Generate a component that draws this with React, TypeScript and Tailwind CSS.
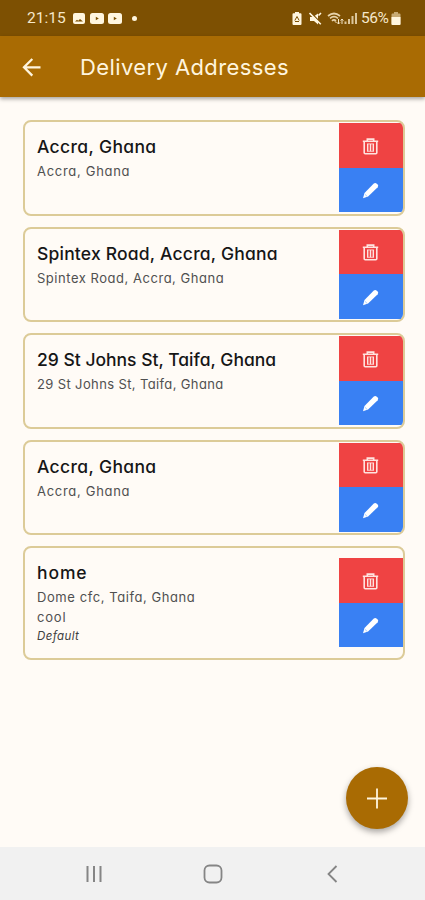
type Address = { title: string; titleTracking: string; line: string; lineTracking: string; note?: string; isDefault?: boolean };

const addresses: Address[] = [
  { title: 'Accra, Ghana', titleTracking: 'tracking-[0.35px]', line: 'Accra, Ghana', lineTracking: 'tracking-[0.7px]' },
  { title: 'Spintex Road, Accra, Ghana', titleTracking: 'tracking-[0.2px]', line: 'Spintex Road, Accra, Ghana', lineTracking: 'tracking-[0.53px]' },
  { title: '29 St Johns St, Taifa, Ghana', titleTracking: 'tracking-[0px]', line: '29 St Johns St, Taifa, Ghana', lineTracking: 'tracking-[0.37px]' },
  { title: 'Accra, Ghana', titleTracking: 'tracking-[0.35px]', line: 'Accra, Ghana', lineTracking: 'tracking-[0.7px]' },
  { title: 'home', titleTracking: 'tracking-[0.9px]', line: 'Dome cfc, Taifa, Ghana', lineTracking: 'tracking-[0.57px]', note: 'cool', isDefault: true },
];

function StatusBar() {
  return (
    <div className="flex h-9 shrink-0 items-center bg-[#7d5002] pl-[27px] pr-[24px] text-[#f6e8cb]">
      <span className="w-[40px] pt-[2px] font-['Roboto',sans-serif] text-[15.5px] leading-none whitespace-nowrap">21:15</span>
      <svg className="ml-[6px]" width="12" height="11" viewBox="0 0 12 11">
        <rect width="12" height="11" rx="2" fill="#fff6df" />
        <path d="M2 8.5 4 6.8l1.2.9L7 6l3 2.5Z" fill="#7d5002" />
      </svg>
      {[0, 1].map((i) => (
        <svg key={i} className={i === 0 ? 'ml-[5px]' : 'ml-[4px]'} width="14" height="11" viewBox="0 0 14 11">
          <rect width="14" height="11" rx="2.5" fill="#fff6df" />
          <path d="m5.8 3.8 3 1.7-3 1.7Z" fill="#7d5002" />
        </svg>
      ))}
      <span className="ml-[10px] size-[5px] rounded-full bg-[#fff6df]" />
      <div className="ml-auto flex items-center">
        <svg className="mr-[1px]" width="10" height="13" viewBox="0 0 10 13">
          <path d="M3 0h4v1.3h1.5q1 0 1 1V12q0 1-1 1h-7q-1 0-1-1V2.3q0-1 1-1H3Z" fill="#fff6df" />
          <path d="M2.8 8.5 5 4.5l2.2 4M3 9.5h4" stroke="#7d5002" fill="none" />
        </svg>
        <svg className="ml-[6px]" width="13" height="13" viewBox="0 0 13 13">
          <path d="M1 5h3l5-3.5v11L5 9H1Z" fill="#fff6df" />
          <path d="m1 0 11 11" stroke="#7d5002" strokeWidth="1.6" />
          <path d="m.5 1 11.3 11.2M9.5 3.5 12 1" stroke="#fff6df" strokeWidth="1.6" />
        </svg>
        <svg className="ml-[5px]" width="17" height="13" viewBox="0 0 17 13">
          <path d="M1 4q6-5 12 0M3 6.4q4-3.4 8 0M5 8.8q2-2 4 0" stroke="#e7d3ab" strokeWidth="1.7" fill="none" />
          <path d="m7 9 2 2 1-1Z" fill="#e7d3ab" />
          <path d="M11.5 7v5M10 10.4l1.5 1.6 1.5-1.6M15 12V7m-1.4 1.6L15 7l1.4 1.6" stroke="#f6e8cb" strokeWidth="1" fill="none" />
        </svg>
        <svg width="14" height="13" viewBox="0 0 14 13">
          <path d="M1.5 12V9.5M5 12V7M8.5 12V4M12 12V1" stroke="#dcc69c" strokeWidth="2" />
        </svg>
        <span className="ml-[3px] w-[30px] pt-[1px] font-['Roboto',sans-serif] text-[15.5px] leading-none tracking-[-0.5px] whitespace-nowrap">56%</span>
        <svg width="10" height="13" viewBox="0 0 10 13">
          <path d="M3 0h4v1.5h1.5q1 0 1 1V12q0 1-1 1h-7q-1 0-1-1V2.5q0-1 1-1H3Z" fill="#c7aa73" />
          <path d="M.5 5h9v7q0 1-1 1h-7q-1 0-1-1Z" fill="#fff6df" />
        </svg>
      </div>
    </div>
  );
}

function Header() {
  return (
    <header className="z-10 flex h-[61px] shrink-0 items-center bg-[#a96b03] pl-[22px] text-[#fff5de] shadow-[0_2px_4px_rgba(0,0,0,0.35)]">
      <svg width="20" height="20" viewBox="0 0 20 20" fill="none" stroke="currentColor" strokeWidth="2.3">
        <path d="M10.3 2 2 10.3 10.3 18.6M2.2 10.3h16.3" />
      </svg>
      <h1 className="ml-[38px] text-[22px] leading-none tracking-[0.4px] whitespace-nowrap">Delivery Addresses</h1>
    </header>
  );
}

function TrashIcon() {
  return (
    <svg className="translate-y-[0.5px]" width="17" height="18" viewBox="0 0 17 18" fill="none" stroke="#ffe3df" strokeWidth="1.6">
      <path d="M.8 3.7h15.4M5.3 3.5V1.6h6.4v1.9" />
      <path d="M2.2 4v11.2q0 1 1 1h10.6q1 0 1-1V4" />
      <path d="M5.7 6.5v7.2M8.5 6.5v7.2M11.3 6.5v7.2" strokeWidth="1.4" />
      <path d="M5 6.4h7M5 13.8h7" strokeWidth=".8" />
    </svg>
  );
}

function PencilIcon() {
  return (
    <svg className="translate-y-[0.5px]" width="17" height="18" viewBox="0 0 17 18">
      <path d="M2.5 11.6 11.8 2.1q1.4-1.2 3 .1l.8.8q1.2 1.4.1 2.7L6.1 15 1 16.7Z" fill="#fff" />
      <path d="m2.8 12.7 2.2 2.1" stroke="#8fc2ff" strokeWidth=".8" />
    </svg>
  );
}

function AddressCard({ address }: { address: Address }) {
  return (
    <article className={`flex items-center overflow-hidden rounded-[8px] border-2 border-[#dccb98] bg-[#fffbf6] ${address.isDefault ? 'h-[113.5px]' : 'h-[95.5px]'}`}>
      <div className="min-w-0 flex-1 self-stretch pl-[12.5px] pt-[13px]">
        <h2 className={`text-[17.5px] leading-[24px] font-medium text-[#161616] whitespace-nowrap ${address.titleTracking}`}>{address.title}</h2>
        <p className={`mt-px text-[13px] leading-[22px] text-[#505050] whitespace-nowrap ${address.lineTracking}`}>{address.line}</p>
        {address.note && <p className="text-[13px] leading-[19px] tracking-[0.8px] text-[#505050]">{address.note}</p>}
        {address.isDefault && <p className="text-[11.5px] leading-[18px] tracking-[0.4px] text-[#404040] italic">Default</p>}
      </div>
      <div className="flex h-[89px] w-[64px] flex-col">
        <button aria-label="Delete" className="flex flex-1 items-center justify-center bg-[#ef4343]"><TrashIcon /></button>
        <button aria-label="Edit" className="flex flex-1 items-center justify-center bg-[#3980f3]"><PencilIcon /></button>
      </div>
    </article>
  );
}

export default function App() {
  return (
    <div className="relative flex h-[900px] w-[425px] flex-col overflow-hidden bg-[#fffbf6] font-['Inter','Open_Sans',sans-serif] [font-feature-settings:'cv11']">
      <StatusBar />
      <Header />
      <main className="flex flex-1 flex-col gap-[11px] pt-[23px] pr-[20.5px] pl-[22.5px]">
        {addresses.map((address, i) => <AddressCard key={i} address={address} />)}
      </main>
      <button aria-label="Add address" className="absolute top-[767px] left-[346px] flex size-[62px] items-center justify-center rounded-full bg-[#a96b03] shadow-[0_3px_6px_rgba(0,0,0,0.35)]">
        <svg className="translate-y-[0.5px]" width="22" height="22" viewBox="0 0 22 22" stroke="#fff6df" strokeWidth="1.8"><path d="M11 1v20M1 11h20" /></svg>
      </button>
      <nav className="flex h-[53px] shrink-0 items-center justify-between bg-[#f1f1f1] pr-[86px] pl-[85px] text-[#858585]">
        <svg width="18" height="18" viewBox="0 0 18 18" stroke="currentColor" strokeWidth="2"><path d="M2.5 1v16M9 1v16M15.5 1v16" /></svg>
        <svg className="-translate-x-px" width="20" height="20" viewBox="0 0 20 20" fill="none" stroke="currentColor" strokeWidth="1.8"><rect x="1.5" y="1.5" width="17" height="17" rx="5" /></svg>
        <svg width="14" height="18" viewBox="0 0 14 18" fill="none" stroke="currentColor" strokeWidth="1.8"><path d="m11.5 1-8 8 8 8" /></svg>
      </nav>
    </div>
  );
}
